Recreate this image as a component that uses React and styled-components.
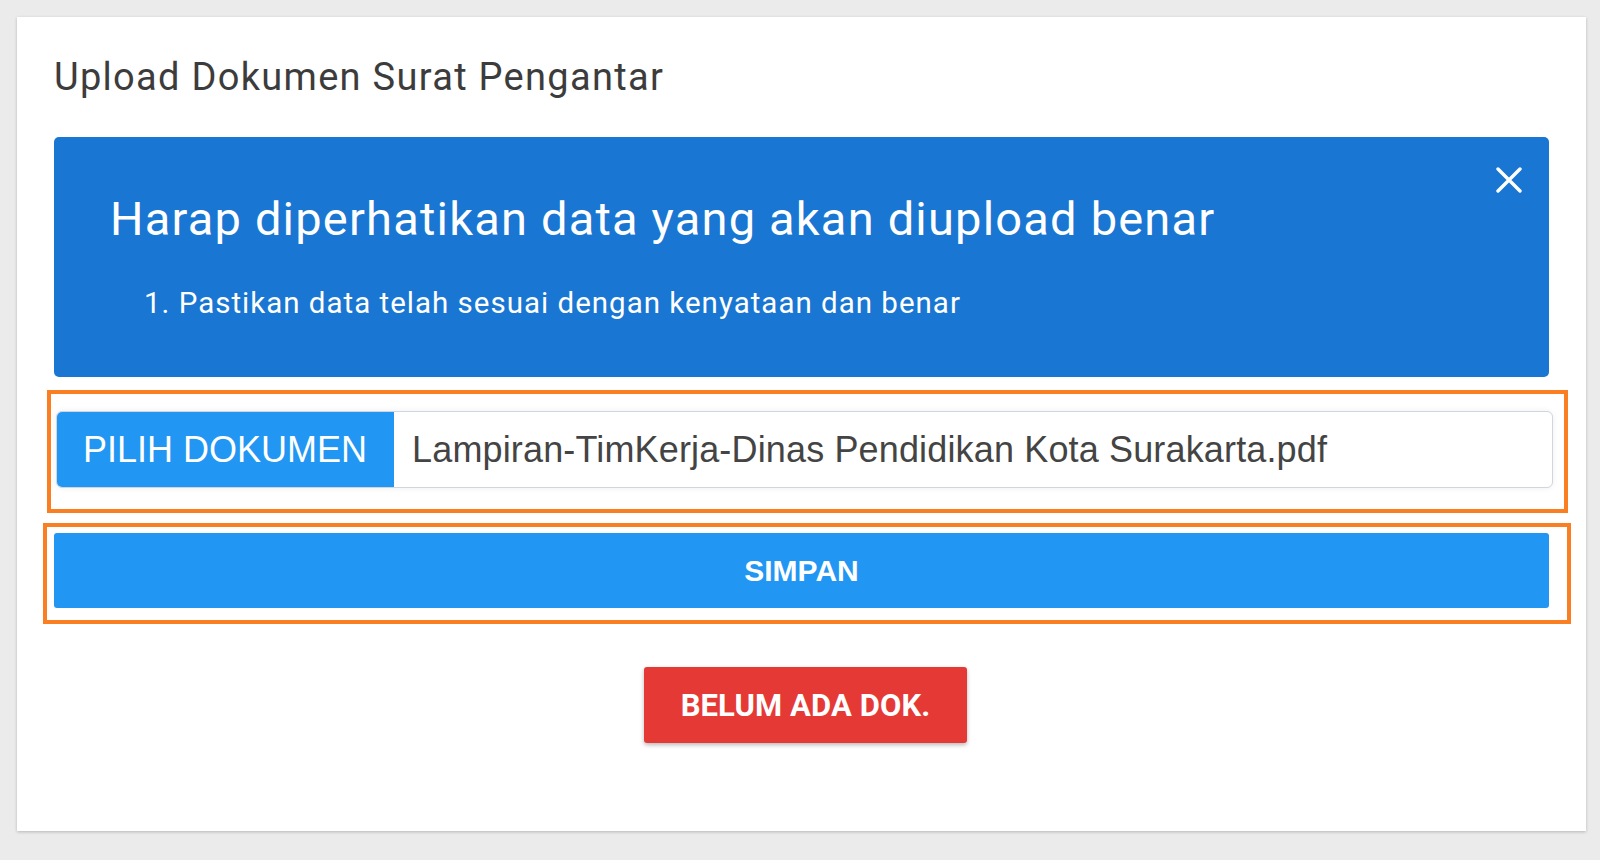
import styled, { createGlobalStyle } from 'styled-components';

const GlobalStyle = createGlobalStyle`
  html, body {
    margin: 0;
    padding: 0;
    background: #ebebeb;
    font-family: Roboto, "Noto Sans", sans-serif;
  }
`;

const Page = styled.div`
  padding: 17px 14px 29px 17px;
`;

const Card = styled.section`
  background: #fff;
  box-shadow: 0 1px 3px rgba(0, 0, 0, 0.22);
  padding: 41px 37px 88px 37px;
  display: flex;
  flex-direction: column;
`;

const Title = styled.h2`
  margin: 0;
  font-family: Roboto, sans-serif;
  font-weight: 400;
  font-size: 38px;
  line-height: 38px;
  letter-spacing: 1.3px;
  color: #3c3c3c;
`;

const Alert = styled.div`
  position: relative;
  margin-top: 41px;
  height: 240px;
  box-sizing: border-box;
  background: #1976d2;
  border-radius: 5px;
  color: #fff;
  padding: 58px 57px 0 56px;
`;

const AlertHeading = styled.h3`
  margin: 0;
  font-weight: 400;
  font-size: 47px;
  line-height: 48px;
  letter-spacing: 1.2px;
`;

const AlertList = styled.ol`
  margin: 45px 0 0 0;
  padding: 0 0 0 34px;
  list-style: decimal inside;
  font-size: 29.5px;
  line-height: 30px;
  letter-spacing: 1px;
`;

const CloseButton = styled.button`
  position: absolute;
  top: 30px;
  right: 27px;
  width: 26px;
  height: 26px;
  padding: 0;
  border: 0;
  background: none;
  cursor: pointer;
  display: flex;
`;

const Highlight = styled.div`
  border: 4px solid #fa7f22;
  margin: ${({ $margin }) => $margin};
  padding: ${({ $padding }) => $padding};
`;

const FileInput = styled.div`
  display: flex;
  align-items: stretch;
  height: 77px;
  box-sizing: border-box;
  border: 1px solid #cfd6de;
  border-radius: 6px;
  box-shadow: 0 0 6px rgba(0, 0, 0, 0.07);
  background: #fff;
  overflow: hidden;
  font-family: "Liberation Sans", Arial, sans-serif;
  font-size: 36px;
`;

const PickButton = styled.span`
  display: flex;
  align-items: center;
  background: #2196f3;
  color: #fff;
  padding: 0 27px 0 27px;
  margin: -1px 0 -1px -1px;
`;

const FileName = styled.span`
  display: flex;
  align-items: center;
  padding-left: 18px;
  color: #444;
  letter-spacing: 0.15px;
`;

const Button = styled.button`
  display: flex;
  align-items: center;
  justify-content: center;
  border: 0;
  color: #fff;
  cursor: pointer;
  border-radius: 3px;
  background: ${({ $color }) => $color};
  height: ${({ $height }) => $height}px;
  font-family: ${({ $font }) => $font};
  font-size: ${({ $size }) => $size}px;
  font-weight: 700;
  box-shadow: ${({ $raised }) => ($raised ? '0 2px 4px rgba(0, 0, 0, 0.28)' : 'none')};
`;

const SaveButton = styled(Button)`
  width: 100%;
`;

const Footer = styled.div`
  display: flex;
  justify-content: center;
  margin-top: 43px;
  padding-left: 8px;
`;

const DangerButton = styled(Button)`
  padding: 0 37px;
  letter-spacing: 0.1px;
`;

const CloseIcon = () => (
  <svg width="26" height="26" viewBox="0 0 26 26">
    <path d="M2 2 L24 24 M24 2 L2 24" stroke="#fff" strokeWidth="3.4" strokeLinecap="round" />
  </svg>
);

export default function App() {
  return (
    <>
      <GlobalStyle />
      <Page>
        <Card>
          <Title>Upload Dokumen Surat Pengantar</Title>
          <Alert>
            <AlertHeading>Harap diperhatikan data yang akan diupload benar</AlertHeading>
            <AlertList>
              <li>Pastikan data telah sesuai dengan kenyataan dan benar</li>
            </AlertList>
            <CloseButton aria-label="Tutup">
              <CloseIcon />
            </CloseButton>
          </Alert>
          <Highlight $margin="13px -19px 0 -7px" $padding="17px 11px 21px 5px">
            <FileInput>
              <PickButton>PILIH DOKUMEN</PickButton>
              <FileName>Lampiran-TimKerja-Dinas Pendidikan Kota Surakarta.pdf</FileName>
            </FileInput>
          </Highlight>
          <Highlight $margin="10px -22px 0 -11px" $padding="6px 18px 12px 7px">
            <SaveButton $color="#2196f3" $height={75} $size={30} $font={'"Liberation Sans", Arial, sans-serif'}>
              SIMPAN
            </SaveButton>
          </Highlight>
          <Footer>
            <DangerButton $color="#e53935" $height={76} $size={31} $font="Roboto, sans-serif" $raised>
              BELUM ADA DOK.
            </DangerButton>
          </Footer>
        </Card>
      </Page>
    </>
  );
}
